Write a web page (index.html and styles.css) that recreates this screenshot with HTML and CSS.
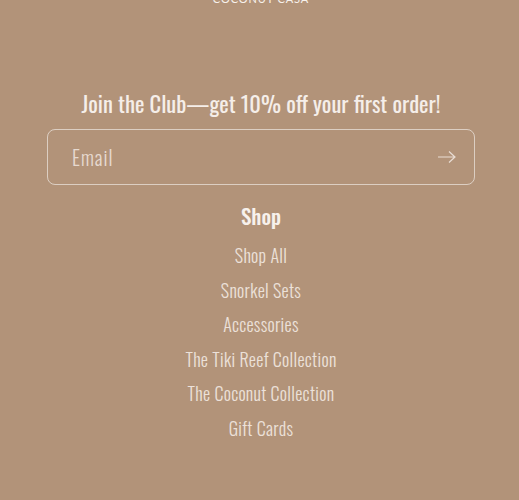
FILE: index.html
```html
<!DOCTYPE html>
<html lang="en">
<head>
  <meta charset="utf-8">
  <link rel="stylesheet" href="styles.css">
</head>
<body>
  <!-- Pie de página -->
  <footer class="footer">
    <div class="brand">COCONUT CASA</div>

    <!-- Boletín -->
    <div class="newsletter">
      <h2 class="newsletter-title">Join the Club—get 10% off your first order!</h2>
      <form class="newsletter-form" onsubmit="return false">
        <input class="newsletter-input" type="email" placeholder="Email">
        <button class="newsletter-button" type="submit" aria-label="Subscribe">
          <svg viewBox="0 0 20 14" width="20" height="14" fill="none" stroke="currentColor" stroke-width="1.2">
            <path d="M1 7h17M12 1.5l6 5.5-6 5.5"/>
          </svg>
        </button>
      </form>
    </div>

    <!-- Menú de la tienda -->
    <div class="menu">
      <h2 class="menu-title">Shop</h2>
      <ul class="menu-list">
        <li><a href="#">Shop All</a></li>
        <li><a href="#">Snorkel Sets</a></li>
        <li><a href="#">Accessories</a></li>
        <li><a href="#">The Tiki Reef Collection</a></li>
        <li><a href="#">The Coconut Collection</a></li>
        <li><a href="#">Gift Cards</a></li>
      </ul>
    </div>
  </footer>
</body>
</html>
```
FILE: styles.css
```css
body {
    margin: 0;
    padding: 0;
    background-color: #b29379;
    font-family: "Oswald", "Roboto Condensed", sans-serif;
    color: #ece1d9;
}

.footer {
    display: flex;
    flex-direction: column;
    align-items: center;
    padding: 0 44px 40px 47px;
}

.brand {
    margin-top: -8px;
    font-family: "Lato", sans-serif;
    font-size: 11px;
    letter-spacing: 0.9px;
    line-height: 13px;
    color: #f7f1ec;
}

.newsletter {
    width: 100%;
    margin-top: 82px;
}

.newsletter-title {
    margin: 0 0 10px;
    font-size: 22.5px;
    font-weight: 400;
    line-height: 32px;
    text-align: center;
    color: #f5eee9;
}

.newsletter-form {
    display: flex;
    align-items: center;
    height: 56px;
    box-sizing: border-box;
    border: 1px solid rgba(255, 255, 255, 0.55);
    border-radius: 8px;
}

.newsletter-input {
    flex: 1;
    min-width: 0;
    border: none;
    outline: none;
    background: transparent;
    padding: 0 0 0 24px;
    font-family: inherit;
    font-size: 20px;
    font-weight: 300;
    letter-spacing: 1px;
    color: #ece1d9;
}

.newsletter-input::placeholder {
    color: #e6d9cf;
}

.newsletter-button {
    display: flex;
    align-items: center;
    justify-content: center;
    width: 54px;
    height: 100%;
    padding: 0;
    border: none;
    background: transparent;
    color: #e9ddd4;
    cursor: pointer;
}

.menu {
    margin-top: 15px;
    text-align: center;
}

.menu-title {
    margin: 0 0 6px;
    font-size: 21px;
    font-weight: 500;
    line-height: 32px;
    color: #f7f1ec;
}

.menu-list {
    list-style: none;
    margin: 0;
    padding: 0;
}

.menu-list li {
    font-size: 18px;
    line-height: 34.5px;
}

.menu-list a {
    font-weight: 300;
    letter-spacing: 0.3px;
    color: #ece1d9;
    text-decoration: none;
}
```
